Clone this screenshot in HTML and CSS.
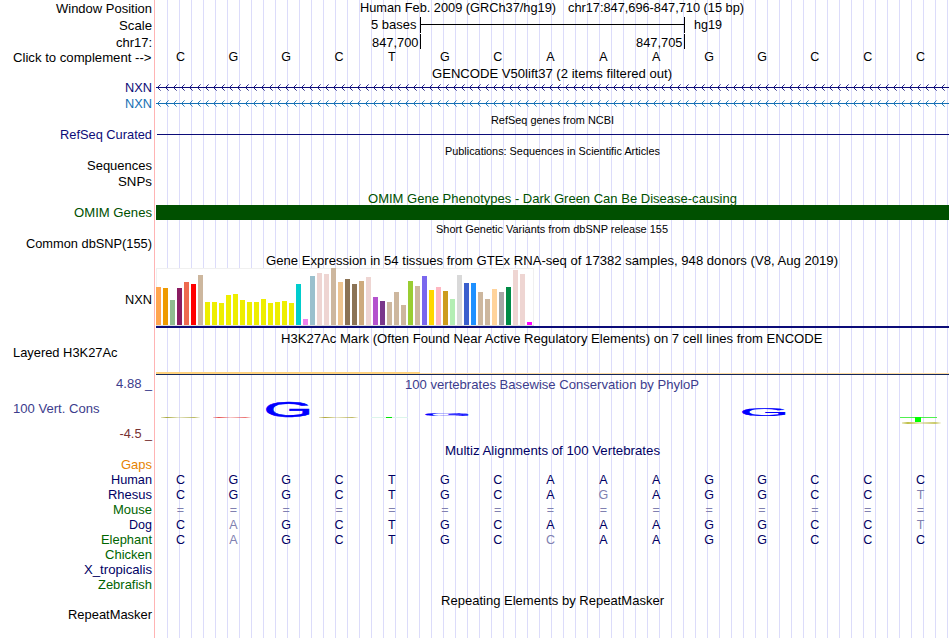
FILE: index.html
```html
<!DOCTYPE html>
<html lang="en">
<head>
<meta charset="utf-8">
<title>chr17:847,696-847,710</title>
<link rel="stylesheet" href="styles.css">
</head>
<body>
<main class="browser" id="browser"></main>
<script src="tracks.js"></script>
</body>
</html>
```
FILE: styles.css
```css
body {
  margin: 0;
  background: #fff;
  font-family: "Liberation Sans", Arial, sans-serif;
}

.browser {
  display: flex;
  flex-direction: column;
  width: 950px;
  height: 638px;
  overflow: hidden;
  background:
    linear-gradient(#ffb4b4, #ffb4b4) 154px 0 / 1px 100% no-repeat,
    repeating-linear-gradient(90deg, #dcdcfa 0 1px, transparent 1px 12px) 167px 0 / 783px 100% no-repeat;
}

.track {
  display: block;
  flex: none;
  width: 950px;
  overflow: visible;
  font-size: 13.6px;
  fill: #000;
}

.small { font-size: 11.3px; }
.navy { fill: #0c0c78; }
.blue { fill: #1470b4; }
.green { fill: #005000; }
.label-green { fill: #006400; }
.deep { fill: #000064; }
.slate { fill: #3c3c8c; }
.maroon { fill: #783232; }
.orange { fill: #e68200; }
.faded { fill: #8080b0; }
.base { text-anchor: middle; }
.logo { fill: #00f; stroke: #00f; stroke-width: 2px; }
.crisp { shape-rendering: crispEdges; }
```
FILE: tracks.js
```js
const text = (x1, x2, y, s, cls = "") =>
  `<text class="${cls}" x="${x1}" y="${y}" textLength="${x2 - x1}" lengthAdjust="spacingAndGlyphs">${s}</text>`;
const rect = (x, y, w, h, color, opacity = 1) =>
  `<rect class="crisp" x="${x}" y="${y}" width="${w}" height="${h}" fill="${color}" opacity="${opacity}"/>`;
const bases = (seq, y, cls = "", faded = "") =>
  [...seq].map((b, i) =>
    `<text class="base ${faded[i] === "x" ? "faded" : cls}" transform="translate(${(180.5 + i * 52.86).toFixed(1)} ${y}) scale(.92 1)">${b}</text>`
  ).join("");
const arrows = (y, color) => {
  let out = rect(156, y, 793, 1, color);
  for (let x = 157; x < 949; x += 8) {
    for (let d = 1; d <= 3; d++) {
      const o = d === 3 ? 0.55 : 0.9;
      out += rect(x + d, y - d, 1, 1, color, o) + rect(x + d, y + d, 1, 1, color, o);
    }
  }
  return out;
};

const tissues = [
  [38, "#ffa54f"], [37, "#ee9a00"], [25, "#8fbc8f"], [37, "#8b1c62"], [43, "#ee6a50"], [41, "#ff0000"], [50, "#cdb79e"],
  ...[23, 23, 22, 30, 31, 25, 23, 23, 26, 22, 23, 24, 22].map(h => [h, "#eeee00"]),
  [41, "#00cdcd"], [6, "#ee82ee"], [49, "#9ac0cd"], [52, "#eed5d2"], [51, "#eed5d2"], [57, "#cdb79e"], [43, "#eec591"],
  [46, "#8b7355"], [41, "#8b7355"], [44, "#cdaa7d"], [48, "#eed5d2"], [28, "#b452cd"], [24, "#7a378b"], [23, "#cdb79e"],
  [33, "#cdb79e"], [20, "#cdb79e"], [44, "#9acd32"], [39, "#cdb79e"], [49, "#7a67ee"], [35, "#ffd700"], [38, "#ffb6c1"],
  [34, "#cd9b1d"], [26, "#b4eeb4"], [50, "#d9d9d9"], [42, "#3a5fcd"], [42, "#1e90ff"], [33, "#cdb79e"], [26, "#cdb79e"],
  [36, "#ffd39b"], [33, "#a6a6a6"], [38, "#008b45"], [55, "#eed5d2"], [51, "#eed5d2"], [3, "#ff00ff"]
];
const expression =
  rect(156, 14, 378, 58, "#f0f0f0") + rect(157, 15, 376, 56, "#fff") + rect(156, 71, 378, 1, "#dcdcdc") +
  tissues.map(([h, c], i) => rect(156 + i * 7, 71 - h, 5, h, c)).join("") +
  rect(156, 72, 793, 2, "#0c0c78");

const logo = (x, y, w, h) =>
  `<text class="logo" font-size="100" transform="translate(${x} ${y}) scale(${w / 68} ${h / 73}) translate(-4 -2)">G</text>`;
const smear = (x, y, w, h, color, id) =>
  `<linearGradient id="${id}"><stop offset="0" stop-color="${color}" stop-opacity=".3"/><stop offset=".15" stop-color="${color}"/>` +
  `<stop offset=".45" stop-color="${color}" stop-opacity=".3"/><stop offset=".85" stop-color="${color}" stop-opacity=".8"/>` +
  `<stop offset="1" stop-color="${color}" stop-opacity=".1"/></linearGradient>` + rect(x, y, w, h, `url(#${id})`);

const species = (name, x, color, seq = "", faded = "") =>
  [15, text(x, 152, 12, name, color) + bases(seq, 12, "deep", faded)];

const tracks = [
  [17, text(56, 152, 13, "Window Position") + text(360, 556, 12, "Human Feb. 2009 (GRCh37/hg19)") + text(568, 744, 12, "chr17:847,696-847,710 (15 bp)")],
  [17, text(119, 152, 13, "Scale") + text(371, 416.5, 12, "5 bases") + text(694, 722, 12, "hg19") +
    rect(420, 0, 1, 16, "#000") + rect(684, 0, 1, 16, "#000") + rect(420, 7, 265, 1, "#000")],
  [15, text(116, 152, 13, "chr17:") + text(372, 418.5, 13, "847,700") + text(636, 682.5, 13, "847,705") +
    rect(420, 0, 1, 15, "#000") + rect(684, 0, 1, 15, "#000")],
  [17, text(13, 151.5, 13, "Click to complement --&gt;") + bases("CGGCTGCAAAGGCCC", 12)],
  [14, text(432, 672, 12, "GENCODE V50lift37 (2 items filtered out)")],
  [16, text(125, 152, 12, "NXN", "navy") + arrows(7, "#0c0c78")],
  [16, text(125, 152, 12, "NXN", "blue") + arrows(7, "#1470b4")],
  [15, text(491, 614, 12, "RefSeq genes from NCBI", "small")],
  [16, text(60, 152, 12, "RefSeq Curated", "navy") + rect(157, 7, 792, 1, "#0c0c78")],
  [15, text(445, 660, 12, "Publications: Sequences in Scientific Articles", "small")],
  [16, text(87, 152, 12, "Sequences")],
  [16, text(118, 152, 12, "SNPs")],
  [15, text(368, 737, 13, "OMIM Gene Phenotypes - Dark Green Can Be Disease-causing", "green")],
  [16, text(74, 152, 12, "OMIM Genes", "green") + rect(156, 0, 793, 15, "#005000")],
  [15, text(436, 668, 12, "Short Genetic Variants from dbSNP release 155", "small")],
  [18, text(26, 152, 12, "Common dbSNP(155)")],
  [76, text(266, 838, 11, "Gene Expression in 54 tissues from GTEx RNA-seq of 17382 samples, 948 donors (V8, Aug 2019)") +
    text(125, 152, 50, "NXN") + expression],
  [15, text(281, 822.5, 13, "H3K27Ac Mark (Often Found Near Active Regulatory Elements) on 7 cell lines from ENCODE")],
  [30, text(13, 117.5, 12, "Layered H3K27Ac") + rect(156, 27, 264, 2, "#ffd27d") + rect(420, 28, 529, 1, "#ffdca0") + rect(156, 29, 793, 1, "#14285a")],
  [70, text(405, 699, 14, "100 vertebrates Basewise Conservation by PhyloP", "slate") +
    text(116, 141.5, 13, "4.88", "slate") + text(145, 152, 13, "_", "slate") +
    text(13, 99.5, 38, "100 Vert. Cons", "slate") +
    text(119.5, 141.5, 63, "-4.5", "maroon") + text(145, 152, 63, "_", "maroon") +
    smear(161, 42, 39, 1, "#a8a83c", "s1") + smear(213, 42, 38, 1, "#e65050", "s2") + logo(266, 42, 43.5, 16) +
    smear(319, 42, 39, 1, "#b0a83c", "s3") + rect(371, 42, 37, 1, "#dcf5eb") + rect(386, 42, 6, 1, "#00e600") +
    logo(425, 41, 43.5, 3.2) + logo(742, 41, 43.5, 8) +
    rect(900, 42, 37, 1, "#50f050") + rect(915, 42, 6, 5, "#00ff00") + smear(902, 47, 39, 2, "#bebe46", "s4")],
  [12, text(445, 660, 10, "Multiz Alignments of 100 Vertebrates", "deep")],
  species("Gaps", 121, "orange"),
  species("Human", 111, "deep", "CGGCTGCAAAGGCCC"),
  species("Rhesus", 108, "deep", "CGGCTGCAGAGGCCT", "--------x-----x"),
  species("Mouse", 113, "label-green", "===============", "xxxxxxxxxxxxxxx"),
  species("Dog", 129, "deep", "CAGCTGCAAAGGCCT", "-x------------x"),
  species("Elephant", 101, "label-green", "CAGCTGCCAAGGCCC", "-x-----x-------"),
  species("Chicken", 105, "label-green"),
  species("X_tropicalis", 84, "deep"),
  species("Zebrafish", 98, "label-green"),
  [15, text(441, 664, 13, "Repeating Elements by RepeatMasker")],
  [31, text(68, 152, 12, "RepeatMasker")]
];

document.getElementById("browser").innerHTML = tracks
  .map(([h, content]) => `<svg class="track" height="${h}" viewBox="0 0 950 ${h}">${content}</svg>`)
  .join("");
```
